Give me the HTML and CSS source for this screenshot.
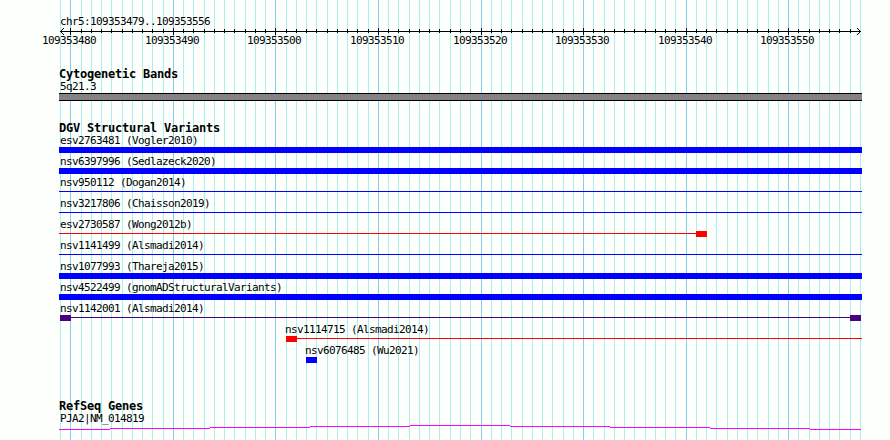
FILE: index.html
```html
<!DOCTYPE html>
<html lang="en">

<head>
    <meta charset="UTF-8" />
    <meta name="viewport" content="width=device-width, initial-scale=1" />
    <title>chr5:109353479..109353556</title>
    <link rel="stylesheet" href="styles.css">
</head>

<body>

    <svg id="grid" class="grid" width="890" height="440"></svg>

    <main class="panel">
        <section class="ruler">
            <div class="label">chr5:109353479..109353556</div>
            <svg id="ruler" class="axis" width="890" height="22"></svg>
        </section>

        <section class="track cytobands">
            <h2>Cytogenetic Bands</h2>
            <div class="label">5q21.3</div>
            <div class="band"></div>
        </section>

        <section class="track variants">
            <h2>DGV Structural Variants</h2>
            <div id="variants"></div>
        </section>

        <section class="track genes">
            <h2>RefSeq Genes</h2>
            <div class="label">PJA2|NM_014819</div>
            <svg class="gene" width="890" height="8">
                <path d="M59 5.5H110M110 4.5H210M210 3.5H310M310 2.5H410M410 1.5H510M510 2.5H610M610 3.5H710M710 4.5H810M810 5.5H861" />
            </svg>
        </section>
    </main>

    <script>
        const START = 109353479;
        const END = 109353556;
        const LEFT = 60;
        const SCALE = 800 / 78;

        // boxes and line are [x1, x2] in pixels
        const variants = [
            { name: "esv2763481 (Vogler2010)", color: "#0000ff", boxes: [[59, 862]] },
            { name: "nsv6397996 (Sedlazeck2020)", color: "#0000ff", boxes: [[59, 862]] },
            { name: "nsv950112 (Dogan2014)", color: "#0000ff", line: [59, 862] },
            { name: "nsv3217806 (Chaisson2019)", color: "#0000ff", line: [59, 862] },
            { name: "esv2730587 (Wong2012b)", color: "#ff0000", line: [59, 696], boxes: [[696, 707]] },
            { name: "nsv1141499 (Alsmadi2014)", color: "#0000ff", line: [59, 862] },
            { name: "nsv1077993 (Thareja2015)", color: "#0000ff", boxes: [[59, 862]] },
            { name: "nsv4522499 (gnomADStructuralVariants)", color: "#0000ff", boxes: [[59, 862]] },
            { name: "nsv1142001 (Alsmadi2014)", color: "#4b0082", line: [71, 850], boxes: [[60, 71], [850, 861]] },
            { name: "nsv1114715 (Alsmadi2014)", color: "#ff0000", x: 285, line: [297, 862], boxes: [[286, 297]] },
            { name: "nsv6076485 (Wu2021)", color: "#0000ff", x: 305, boxes: [[306, 317]] }
        ];

        function rect(x, y, w, h, fill) {
            return `<rect x="${x}" y="${y}" width="${w}" height="${h}" fill="${fill}" />`;
        }

        function renderScale() {
            let lines = "";
            let axis = rect(60, 7, 801, 1, "#000");

            for (let pos = START; pos <= END + 1; pos++) {
                const x = Math.round(LEFT + (pos - START) * SCALE);
                const major = pos % 10 === 0;
                lines += rect(x, 0, 1, 440, major ? "#87ceeb" : "#afeeee");

                if (major) {
                    axis += rect(x, 4, 1, 7, "#000");
                    axis += `<text x="${x - 28}" y="20">${pos}</text>`;
                } else if (pos > START && pos <= END) {
                    axis += rect(x, 5, 1, 4, "#000");
                }
            }

            // arrow heads
            axis += `<path d="M64 4L60.5 7.5L64 11M857 4L860.5 7.5L857 11" />`;

            document.getElementById("grid").innerHTML = lines;
            document.getElementById("ruler").innerHTML = axis;
        }

        function renderVariants() {
            const list = document.getElementById("variants");

            for (const v of variants) {
                const row = document.createElement("div");
                row.className = "variant";

                let shapes = "";
                if (v.line) shapes += rect(v.line[0], 2, v.line[1] - v.line[0], 1, v.color);
                for (const [x1, x2] of v.boxes || []) {
                    shapes += rect(x1, 0, x2 - x1, 6, v.color);
                }

                row.innerHTML = `
        <div class="label" style="padding-left: ${v.x || 60}px">${v.name}</div>
        <svg width="890" height="6">${shapes}</svg>
      `;
                list.appendChild(row);
            }
        }

        renderScale();
        renderVariants();
    </script>

</body>

</html>
```

FILE: styles.css
```css
body {
    margin: 0;
    width: 890px;
    height: 440px;
    overflow: hidden;
    position: relative;
    background: #fdfffc;
    color: #000;
    font-family: "DejaVu Sans Mono", monospace;
}

svg {
    display: block;
    shape-rendering: crispEdges;
}

.grid {
    position: absolute;
    top: 0;
    left: 0;
}

.panel {
    position: relative;
    padding-top: 15px;
}

.label,
.axis text {
    font-size: 11px;
    letter-spacing: -0.622px;
    white-space: pre;
}

.label {
    height: 13px;
    line-height: 13px;
    padding-left: 60px;
}

.ruler {
    height: 52px;
}

.axis {
    margin-top: -4px;
    overflow: visible;
}

.axis path {
    fill: none;
    stroke: #000;
}

h2 {
    margin: 0;
    padding-left: 59px;
    height: 13px;
    line-height: 15px;
    font-size: 12px;
    font-weight: bold;
    letter-spacing: -0.224px;
}

.cytobands {
    height: 54px;
}

.band {
    box-sizing: border-box;
    width: 803px;
    height: 8px;
    margin-left: 59px;
    background: #848284;
    border-top: 1px solid #000;
    border-bottom: 1px solid #000;
}

.variants {
    height: 278px;
}

.variant {
    height: 21px;
}

.genes .label {
    height: 12px;
}

.gene path {
    fill: none;
    stroke: #ff00ff;
}
```
